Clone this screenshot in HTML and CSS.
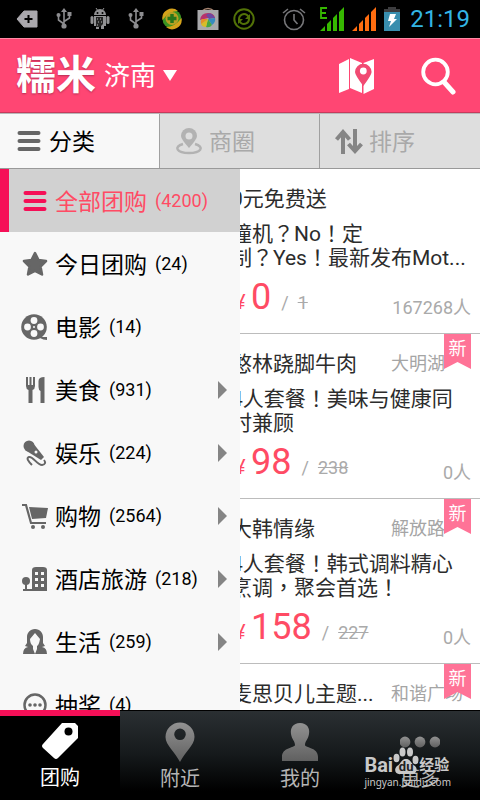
FILE: index.html
```html
<!DOCTYPE html>
<html lang="zh-CN">
<head>
<meta charset="utf-8">
<meta name="viewport" content="width=device-width, initial-scale=1">
<title>糯米团购</title>
<link rel="stylesheet" href="styles.css">
</head>
<body>
<svg class="defs" width="0" height="0" aria-hidden="true">
  <defs>
    <linearGradient id="metal" x1="0" y1="0" x2="0" y2="1"><stop offset="0" stop-color="#929292"/><stop offset="1" stop-color="#606060"/></linearGradient>
    <symbol id="usb" viewBox="0 0 24 24"><g fill="none" stroke="#8d8d90" stroke-width="1.6"><path d="M12 4v15M12 17L6.500 13V8M12 14.500L17.500 11V7"/></g><g fill="#8d8d90"><path d="M12 1l3 4H9z"/><circle cx="12" cy="19" r="2.600"/><circle cx="6.500" cy="8" r="2"/><path d="M15.500 5h4v4h-4z"/></g></symbol>
    <symbol id="bars" viewBox="0 0 24 24"><path d="M0 24l5-5v5zM7 24v-7l4-4v11zM13 24V11l4-4v17zM19 24V5l5-5v24z"/></symbol>
    <symbol id="menu" viewBox="0 0 28 28"><path d="M4.500 6h19M4.500 14h19M4.500 22h19" stroke="currentColor" stroke-width="4" stroke-linecap="round"/></symbol>
  </defs>
</svg>

<div class="status">
  <div class="status-left">
    <svg viewBox="0 0 24 24"><path d="M8 4h13v16H8l-7-8z" fill="#aaa8ad" stroke="#aaa8ad" stroke-linejoin="round"/><path d="M12.500 8v8M8.500 12h8" stroke="#000" stroke-width="2"/></svg>
    <svg viewBox="0 0 24 24"><use href="#usb"/></svg>
    <svg viewBox="0 0 24 24"><g fill="#929294"><path d="M6 8a6 6 0 0 1 12 0z"/><path d="M6 9h12v10H6z"/><rect x="2.500" y="9" width="3" height="8" rx="1.500"/><rect x="18.500" y="9" width="3" height="8" rx="1.500"/><path d="M8 18h3v4H8zM13 18h3v4h-3z"/><path d="M8 1l2 3M16 1l-2 3" stroke="#929294"/></g><circle cx="9.500" cy="6" r="1"/><circle cx="14.500" cy="6" r="1"/><path d="M8 10h7v7l-3 3H8z" fill="#252525"/><path d="M9 12h1m2 0h1m-3 3h1m2 0h1m-5 3h1" stroke="#bbb"/></svg>
    <svg viewBox="0 0 24 24"><use href="#usb"/></svg>
    <svg viewBox="0 0 24 24"><circle cx="12" cy="12" r="9.500" fill="#3b9422"/><path d="M2.500 13A9.500 9.500 0 0 1 18 4Q9 4 2.500 13zM21.500 11A9.500 9.500 0 0 1 6 20q9 0 15.500-9z" fill="#d5a21a"/><circle cx="12" cy="11.500" r="6.500" fill="#b9a024"/><path d="M12 7v9M7.500 11.500h9" stroke="#28751a" stroke-width="3.500"/></svg>
    <svg viewBox="0 0 24 24"><path d="M6 4q6-5 12 0" fill="none" stroke="#a68471" stroke-width="1.500"/><path d="M1.500 3h21v20h-21z" fill="#a9a9ac"/><path d="M4 13Q5 6 12 6q6 0 7 5l-7 0z" fill="#b8326a"/><path d="M10 8q5-4 9 3l-6 1z" fill="#6d48a2"/><path d="M12 12l7-1q1 4-3 7z" fill="#358bbf"/><path d="M12 12l4 6q-2 3-6 2z" fill="#45a743"/><path d="M12 12l-2 8q-4 0-5-3z" fill="#d8bd27"/><path d="M12 12l-7 5q-1-3 1-5z" fill="#e58f24"/></svg>
    <svg viewBox="0 0 24 24"><circle cx="12" cy="12" r="9.700" fill="none" stroke="#527207" stroke-width="2"/><path d="M7 12a5 5 0 0 1 8-4l2 2M17 12a5 5 0 0 1-8 4l-2-2" fill="none" stroke="#527207" stroke-width="2"/><path d="M18 7v5h-5zM6 17v-5h5z" fill="#527207"/></svg>
  </div>
  <div class="status-right">
    <svg class="alarm" viewBox="0 0 24 24" fill="none" stroke="#77777a" stroke-width="1.600"><circle cx="12" cy="13" r="9.500"/><path d="M12 7v6l3.500 4M1 6l5-4M23 6l-5-4"/></svg>
    <svg viewBox="0 0 24 24" fill="#36b800"><use href="#bars"/><path d="M7 1H1v10h6M1 6h5" fill="none" stroke="#36b800" stroke-width="1.800"/></svg>
    <svg viewBox="0 0 24 24" fill="#ff6d10"><use href="#bars"/></svg>
    <svg class="battery" viewBox="0 0 18 24"><path d="M4 0h8v2h4v22H0V2h4z" fill="#3d3d3f"/><path d="M0 5h16v19H0z" fill="#398eae"/><path d="M6 7h6l-2 5h3l-8 8 2-6H4z" fill="#fff"/></svg>
    <time>21:19</time>
  </div>
</div>

<header class="header">
  <h1 class="logo">糯米</h1>
  <button class="city" type="button">济南 <svg viewBox="0 0 14 11" width="14" height="11"><path d="M0 0h14L7 11z" fill="#fff"/></svg></button>
  <button class="tool" type="button" aria-label="地图"><svg viewBox="0 0 36 36" width="36" height="36"><path d="M0 6L10 1v30L0 35zM11 0l12 5v30l-12-5zM24.500 5L35 1v30l-10.500 5z" fill="#fff"/><path d="M24.300 28Q16 17 16 14a8.300 8.300 0 0 1 16.600 0q0 3-8.300 14z" fill="#f14a72"/><circle cx="24.300" cy="13" r="3.400" fill="#fff"/></svg></button>
  <button class="tool search" type="button" aria-label="搜索"><svg viewBox="0 0 36 38" width="36" height="38" fill="none" stroke="#fff"><circle cx="14.500" cy="15" r="12.300" stroke-width="3.800"/><path d="M23 25l9 10" stroke-width="5" stroke-linecap="round"/></svg></button>
</header>

<div class="tabs">
  <button class="tab active" type="button"><svg viewBox="0 0 28 28"><use href="#menu"/></svg><span>分类</span></button>
  <button class="tab" type="button"><svg viewBox="0 0 28 28"><path d="M8 17c-10 3-6 9 6 9s16-6 6-9" fill="none" stroke="#b2b2b2" stroke-width="2.500"/><path d="M14 21Q6 12 6 9a8 8 0 0 1 16 0q0 3-8 12z" fill="#b2b2b2"/><circle cx="14" cy="9" r="3.500" fill="#dedede"/></svg><span>商圈</span></button>
  <button class="tab" type="button"><svg viewBox="0 0 28 28" fill="none" stroke="#858585" stroke-width="4"><path d="M8 27V5M1.500 12.500L8 5l6.500 7.500M20 2v22M13.500 17l6.500 7 6.500-7"/></svg><span>排序</span></button>
</div>

<main class="content">
  <section class="deals" aria-label="团购列表">
    <article class="deal">
      <div class="deal-head"><h2>0元免费送</h2></div>
      <p class="desc">撞机？No！定<br>制？Yes！最新发布Mot...</p>
      <div class="deal-foot"><span class="yen">¥</span><b class="price">0</b><span class="old">/</span><s class="old">1</s><span class="sold">167268人</span></div>
    </article>
    <article class="deal">
      <div class="deal-head"><h2>憨林跷脚牛肉</h2><span class="area">大明湖</span></div>
      <span class="badge">新</span>
      <p class="desc">4人套餐！美味与健康同<br>时兼顾</p>
      <div class="deal-foot"><span class="yen">¥</span><b class="price">98</b><span class="old">/</span><s class="old">238</s><span class="sold">0人</span></div>
    </article>
    <article class="deal">
      <div class="deal-head"><h2>大韩情缘</h2><span class="area">解放路</span></div>
      <span class="badge">新</span>
      <p class="desc">4人套餐！韩式调料精心<br>烹调，聚会首选！</p>
      <div class="deal-foot"><span class="yen">¥</span><b class="price">158</b><span class="old">/</span><s class="old">227</s><span class="sold">0人</span></div>
    </article>
    <article class="deal">
      <div class="deal-head"><h2>麦思贝儿主题...</h2><span class="area">和谐广场</span></div>
      <span class="badge">新</span>
    </article>
  </section>

  <nav class="drawer" aria-label="分类">
    <button class="cat selected" type="button"><svg viewBox="0 0 28 28"><use href="#menu"/></svg><b>全部团购</b><span>(4200)</span></button>
    <button class="cat" type="button"><svg viewBox="0 0 28 28"><path d="M14 3l3.500 7 7.500 1-5.500 5.500 1.500 8-7-3.500-7 3.500 1.500-8L3 11l7.500-1z" fill="currentColor" stroke="currentColor" stroke-width="2.500" stroke-linejoin="round"/></svg><b>今日团购</b><span>(24)</span></button>
    <button class="cat" type="button"><svg viewBox="0 0 28 28"><path d="M18 24h8v3q-4 0-7-2z" fill="currentColor"/><circle cx="13" cy="14" r="12.800" fill="currentColor"/><g fill="#f8f8f8"><circle cx="13" cy="7.500" r="3.400"/><circle cx="13" cy="20.500" r="3.400"/><circle cx="6.500" cy="14" r="3.400"/><circle cx="19.500" cy="14" r="3.400"/><circle cx="13" cy="14" r="1"/></g></svg><b>电影</b><span>(14)</span></button>
    <button class="cat" type="button"><svg viewBox="0 0 28 28" fill="currentColor"><path d="M5 1h2v8h1.500V1h2v8H12V1h2v9q0 3-2.500 4v13h-4V14Q5 13 5 10zM23.500 1v26h-4V15q-2-1-2-4V5q0-4 6-4z"/></svg><b>美食</b><span>(931)</span><i></i></button>
    <button class="cat" type="button"><svg viewBox="0 0 28 28"><circle cx="8" cy="7" r="5.500" fill="currentColor"/><path d="M4 11l8-7 11 14-3 3z" fill="currentColor"/><circle cx="15" cy="13" r="1.500" fill="#f8f8f8"/><path d="M11 26c-4-4-6-7-3-8 4-1 8 8 13 8q5-1 2-5" fill="none" stroke="currentColor" stroke-width="2"/></svg><b>娱乐</b><span>(224)</span><i></i></button>
    <button class="cat" type="button"><svg viewBox="0 0 28 28"><path d="M1 3h4l5 18h15" fill="none" stroke="currentColor" stroke-width="2.200"/><path d="M8 5l19 1-2 10-14 1z" fill="currentColor"/><circle cx="12" cy="25" r="2" fill="currentColor"/><circle cx="22" cy="25" r="2" fill="currentColor"/></svg><b>购物</b><span>(2564)</span><i></i></button>
    <button class="cat" type="button"><svg viewBox="0 0 28 28"><path d="M11 26V5q0-3 4-3h7q4 0 4 3v21zM2 24h10v2H2zM4 18h2v7H4z" fill="currentColor"/><circle cx="5" cy="16" r="4" fill="currentColor"/><path d="M14 7h3v3h-3zM20 7h3v3h-3zM14 13h3v3h-3zM20 13h3v3h-3zM14 19h3v3h-3zM20 19h3v3h-3z" fill="#f8f8f8"/></svg><b>酒店旅游</b><span>(218)</span><i></i></button>
    <button class="cat" type="button"><svg viewBox="0 0 28 28"><path d="M14 1c5 0 8 4 8 8v6l2 3-3 1q5 1 5 7H2q0-6 5-7l-3-1 2-3V9c0-4 3-8 8-8z" fill="currentColor"/><path d="M14 5l5 6q-1 6-3 7v3l-2 5-2-5v-3q-3-2-3-7z" fill="#f8f8f8"/></svg><b>生活</b><span>(259)</span><i></i></button>
    <button class="cat" type="button"><svg viewBox="0 0 28 28"><circle cx="14" cy="14" r="10.500" fill="none" stroke="currentColor" stroke-width="2.500"/><g fill="currentColor"><circle cx="9" cy="14" r="1.800"/><circle cx="14" cy="14" r="1.800"/><circle cx="19" cy="14" r="1.800"/></g></svg><b>抽奖</b><span>(4)</span></button>
  </nav>
</main>

<footer class="bottom">
  <nav class="bottom-nav">
    <a class="current" href="#"><svg viewBox="0 0 40 40"><path d="M22 2h13l3 3v12L18 37q-2 2-4 0L3 27q-2-2 0-4z" fill="#fff"/><circle cx="28.500" cy="10.500" r="4" fill="#000"/></svg>团购</a>
    <a href="#"><svg viewBox="0 0 40 40"><path fill-rule="evenodd" d="M20 40C15 30 5.500 23 5.500 15a14.500 14.500 0 0 1 29 0C34.500 23 25 30 20 40zM20 6.500a5.800 5.800 0 1 0 0 11.600A5.800 5.800 0 0 0 20 6.500z" fill="url(#metal)"/></svg>附近</a>
    <a href="#"><svg viewBox="0 0 40 40"><path d="M20 1c7 0 10 5 9 11-1 6-4 7-4 11 0 3 13 2 13 12v4H2v-4c0-10 13-9 13-12 0-4-3-5-4-11-1-6 2-11 9-11z" fill="url(#metal)"/></svg>我的</a>
    <a href="#"><svg viewBox="0 0 40 40" fill="url(#metal)"><circle cx="5" cy="20" r="5.400"/><circle cx="20" cy="20" r="5.400"/><circle cx="35" cy="20" r="5.400"/></svg>更多</a>
  </nav>
  <div class="watermark">
    <div class="brand"><b>Bai</b><span class="paw"><svg viewBox="0 0 26 28" width="26" height="28" fill="#c9c9c9"><ellipse cx="3.500" cy="11" rx="3" ry="4.200"/><ellipse cx="9.500" cy="5" rx="3" ry="4.500"/><ellipse cx="17" cy="5" rx="3" ry="4.500"/><ellipse cx="22.500" cy="13" rx="3" ry="4.200"/><path d="M13 12c5 0 5 5 9 7 4 4 0 9-4 8h-10c-5 1-8-4-4-8 4-2 4-7 9-7z"/></svg><em>du</em></span><b>经验</b></div>
    <div class="site">jingyan.baidu.com</div>
  </div>
</footer>
</body>
</html>
```

FILE: styles.css
```css
* {
  box-sizing: border-box;
}

body {
  margin: 0;
  height: 100vh;
  display: flex;
  flex-direction: column;
  overflow: hidden;
  background: #fff;
  font-family: Roboto, "Noto Sans CJK SC", sans-serif;
  color: #2c2c2c;
}

button {
  margin: 0;
  padding: 0;
  border: 0;
  background: none;
  font: inherit;
  color: inherit;
}

svg {
  flex: none;
  display: block;
}

.defs {
  position: absolute;
}

/* Status bar */
.status {
  flex: none;
  height: 38px;
  padding: 0 10px;
  display: flex;
  align-items: center;
  justify-content: space-between;
  background: #000;
}

.status-left,
.status-right {
  display: flex;
  align-items: center;
}

.status-left {
  gap: 12px;
  padding-left: 6px;
}

.status-left svg {
  width: 24px;
  height: 24px;
}

.status-right {
  gap: 8px;
}

.status-right svg {
  width: 24px;
  height: 24px;
}

.status-right .alarm {
  margin-right: 6px;
}

.status-right .battery {
  width: 18px;
}

.status time {
  font-size: 24px;
  line-height: 38px;
  color: #33b5e5;
}

/* Header */
.header {
  flex: none;
  height: 75px;
  padding: 0 23px 0 16px;
  display: flex;
  align-items: center;
  background: #ff4673;
  border-top: 1px solid #ff8aa5;
  border-bottom: 1px solid #c63a5c;
  color: #fff;
}

.logo {
  margin: 0 8px 0 0;
  font-size: 40px;
  line-height: 56px;
  font-weight: 700;
  text-shadow: 0 1px 2px #b52f54;
}

.city {
  display: flex;
  align-items: center;
  gap: 7px;
  margin-right: auto;
  font-size: 26px;
  line-height: 36px;
}

.search {
  margin-left: 46px;
}

/* Filter tabs */
.tabs {
  flex: none;
  height: 56px;
  display: flex;
  background: #dedede;
  border-top: 1px solid #b8b8b8;
  border-bottom: 1px solid #999;
}

.tab {
  flex: 1 1 0;
  display: flex;
  align-items: center;
  gap: 6px;
  padding-left: 15px;
  border-right: 1px solid #a0a0a0;
  font-size: 23px;
  color: #a9a9a9;
}

.tab:last-child {
  border-right-color: transparent;
}

.tab svg {
  width: 28px;
  height: 28px;
}

.tab span {
  padding-bottom: 2px;
}

.tab.active {
  background: #f8f8f8;
  color: #000;
}

.tab.active svg {
  color: #666;
}

/* Deals */
.content {
  flex: 1;
  min-height: 0;
  position: relative;
  overflow: hidden;
}

.deal {
  position: relative;
  height: 165px;
  padding: 18px 9px 0 231px;
  border-bottom: 1px solid #bcbcbc;
}

.deal-head {
  display: flex;
  justify-content: space-between;
  line-height: 24px;
}

.deal h2 {
  margin: 0;
  font-size: 21px;
  font-weight: 400;
  white-space: nowrap;
}

.area {
  width: 80px;
  font-size: 18px;
  color: #a5a5a5;
}

.badge {
  position: absolute;
  top: 0;
  right: 9px;
  width: 27px;
  height: 35px;
  background: #ff7397;
  clip-path: polygon(0 0, 100% 0, 100% 100%, 50% 80%, 0 100%);
  font-size: 18px;
  line-height: 30px;
  text-align: center;
  color: #fff;
}

/* Centred full-width punctuation */
.desc {
  margin: 11px 0 7px;
  font-family: Roboto, "Noto Sans CJK TC", sans-serif;
  font-feature-settings: "locl" 0;
  font-size: 21px;
  line-height: 24px;
  white-space: nowrap;
}

.deal-foot {
  display: flex;
  align-items: baseline;
  line-height: 40px;
}

.yen {
  width: 20px;
  padding-left: 4px;
  font-size: 20px;
  color: #ff4b64;
}

.price {
  margin-right: 10px;
  font-size: 36px;
  font-weight: 400;
  color: #ff4b64;
}

.old {
  margin-right: 9px;
  font-size: 18px;
  color: #aaa;
}

.sold {
  margin-left: auto;
  font-size: 18px;
  line-height: 30px;
  align-self: flex-end;
  color: #aaa;
}

/* Category drawer over the deal list */
.drawer {
  position: absolute;
  inset: 0 50% 0 0;
  overflow: hidden;
  background: #f8f8f8;
}

.cat {
  width: 100%;
  height: 63px;
  padding: 0 13px 0 21px;
  display: flex;
  align-items: center;
  font-size: 23px;
  color: #000;
}

.cat svg {
  width: 28px;
  height: 28px;
  margin-right: 6px;
  color: #666;
}

.cat b {
  padding-bottom: 2px;
  font-weight: 400;
}

.cat span {
  margin-left: 8px;
  font-size: 18px;
}

.cat i {
  margin-left: auto;
  border: 9px solid transparent;
  border-left-color: #858585;
  border-right-width: 0;
}

.cat.selected {
  padding-left: 12px;
  border-left: 9px solid #f50f57;
  background: #d1d1d1;
  color: #ff4b64;
}

.cat.selected svg {
  color: #f50f57;
}

/* Bottom navigation */
.bottom {
  flex: none;
  position: relative;
}

.bottom-nav {
  height: 90px;
  display: flex;
  background: linear-gradient(#2b3033, #15191b 50%, #000 90%);
}

.bottom-nav a {
  flex: 1 1 0;
  display: flex;
  flex-direction: column;
  align-items: center;
  padding-top: 11px;
  border-top: 1px solid #000;
  font-size: 20px;
  line-height: 30px;
  text-decoration: none;
  color: #b5b5b5;
}

.bottom-nav svg {
  width: 40px;
  height: 40px;
  margin-bottom: 2px;
}

.bottom-nav .current {
  padding-top: 5px;
  border-top: 6px solid #f50f57;
  background: #000;
  color: #fff;
}

.watermark {
  position: absolute;
  right: 29px;
  bottom: 11px;
  color: #c9c9c9;
}

.brand {
  display: flex;
  align-items: flex-end;
  font-size: 20px;
  line-height: 20px;
}

.brand b:last-child {
  font-size: 15px;
}

.paw {
  position: relative;
}

.paw em {
  position: absolute;
  inset: auto 0 0;
  font-size: 13px;
  line-height: 16px;
  font-style: normal;
  font-weight: 700;
  text-align: center;
  color: #222;
}

.site {
  font-family: "Noto Sans", sans-serif;
  font-size: 10px;
  line-height: 14px;
}
```
